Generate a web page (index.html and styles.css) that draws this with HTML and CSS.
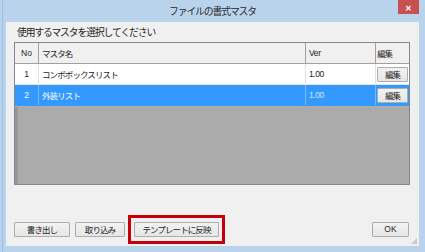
FILE: index.html
```html
<!DOCTYPE html>
<html lang="ja">
  <head>
    <meta charset="UTF-8" />
    <title>ファイルの書式マスタ</title>
    <link rel="stylesheet" href="styles.css">
  </head>
  <body>
    <div class="window">
      <div class="titlebar">
        <span class="title">ファイルの書式マスタ</span>
        <div class="close">&#x2715;</div>
      </div>
      <div class="client">
        <div class="prompt">使用するマスタを選択してください</div>
        <div class="grid">
          <div class="row head">
            <div class="cell c-no">No</div>
            <div class="cell c-name">マスタ名</div>
            <div class="cell c-ver">Ver</div>
            <div class="cell c-edit">編集</div>
          </div>
          <div class="row">
            <div class="cell c-no">1</div>
            <div class="cell c-name">コンボボックスリスト</div>
            <div class="cell c-ver">1.00</div>
            <div class="cell c-edit"><button class="btn small">編集</button></div>
          </div>
          <div class="row selected">
            <div class="cell c-no">2</div>
            <div class="cell c-name">外装リスト</div>
            <div class="cell c-ver">1.00</div>
            <div class="cell c-edit"><button class="btn small">編集</button></div>
          </div>
          <div class="empty"></div>
        </div>
        <div class="actions">
          <button class="btn b-export">書き出し</button>
          <button class="btn b-import">取り込み</button>
          <span class="highlight"><button class="btn b-template">テンプレートに反映</button></span>
          <button class="btn b-ok">OK</button>
        </div>
        <div class="grip"></div>
      </div>
    </div>
  </body>
</html>
```

FILE: styles.css
```css
body {
  margin: 0;
  font-family: "Noto Sans CJK JP", "Liberation Sans", sans-serif;
  color: #1e1e1e;
}
.window {
  width: 425px;
  height: 252px;
  background: #bad3ec;
  box-shadow: inset 2px 0 0 #bad3ec, inset 3px 0 0 #9ebfe0;
  display: flex;
  flex-direction: column;
}
.titlebar {
  height: 22px;
  flex-shrink: 0;
  position: relative;
  display: flex;
  justify-content: center;
  align-items: center;
}
.title {
  font-size: 9.8px;
  letter-spacing: -1.1px;
  color: #2a2a2a;
}
.close {
  position: absolute;
  top: 0;
  right: 6px;
  width: 21px;
  height: 14px;
  background: #c75050;
  color: #fff;
  font-size: 8px;
  font-weight: bold;
  display: flex;
  align-items: center;
  justify-content: center;
}
.client {
  margin: 0 6px 6px 6px;
  flex: 1;
  min-height: 0;
  background: #f0f0f0;
  position: relative;
  display: flex;
  flex-direction: column;
}
.prompt {
  font-size: 9.8px;
  letter-spacing: -1.1px;
  padding: 3px 0 0 11px;
  height: 17px;
  flex-shrink: 0;
}
.grid {
  margin-left: 8px;
  width: 394px;
  height: 141px;
  flex-shrink: 0;
  border: 1px solid #828790;
  display: flex;
  flex-direction: column;
  background: #ababab;
}
.row {
  display: flex;
  height: 20px;
  background: #fff;
  border-bottom: 1px solid #e3e3e3;
  font-size: 8.5px;
}
.row.head {
  background: #f0f0f0;
  border-bottom: 1px solid #a0a0a0;
}
.cell {
  display: flex;
  align-items: center;
  border-right: 1px solid #a0a0a0;
  padding-left: 3px;
  box-sizing: border-box;
  letter-spacing: -0.9px;
}
.row:not(.head) .cell {
  border-right-color: #e3e3e3;
}
.c-no {
  width: 24px;
  justify-content: center;
  padding-left: 0;
  font-family: "Liberation Sans", sans-serif;
  letter-spacing: 0;
}
.c-name { width: 267px; }
.c-ver {
  width: 70px;
  font-family: "Liberation Sans", sans-serif;
  letter-spacing: -0.4px;
}
.c-edit {
  width: 33px;
  border-right: none;
  padding-left: 1px;
}
.row.selected {
  background: #3399ff;
  color: #fff;
  border-bottom-color: #3399ff;
}
.row.selected .cell { border-right-color: #7ab8f5; }
.row.selected .c-ver { color: #cfe4fb; }
.empty {
  flex: 1;
  border-top: 1px solid #b0b0b0;
  box-shadow: inset 3px 0 0 #979797;
}
.btn {
  font-family: "Noto Sans CJK JP", "Liberation Sans", sans-serif;
  font-size: 8.5px;
  letter-spacing: -0.9px;
  color: #1e1e1e;
  background: linear-gradient(#f2f2f2, #e6e6e6);
  border: 1px solid #adadad;
  border-radius: 1px;
  padding: 0;
  height: 15px;
  line-height: 13px;
}
.btn.small {
  width: 31px;
  height: 15px;
}
.actions {
  display: flex;
  align-items: center;
  padding: 0 0 0 8px;
  margin-top: 30px;
}
.b-export { width: 56px; }
.b-import { width: 50px; margin-left: 5px; }
.highlight {
  margin-left: 3px;
  border: 3px solid #c4000a;
  padding: 4px 3px;
  display: flex;
}
.b-template { width: 85px; }
.b-ok {
  width: 37px;
  margin-left: auto;
  margin-right: 10px;
  font-family: "Liberation Sans", sans-serif;
  letter-spacing: 0;
}
.grip {
  position: absolute;
  right: 2px;
  bottom: 2px;
  width: 6px;
  height: 6px;
  background: radial-gradient(circle, #b5b5b5 0.6px, transparent 0.9px) 0 0 / 2px 2px;
  clip-path: polygon(100% 0, 100% 100%, 0 100%);
}
```
